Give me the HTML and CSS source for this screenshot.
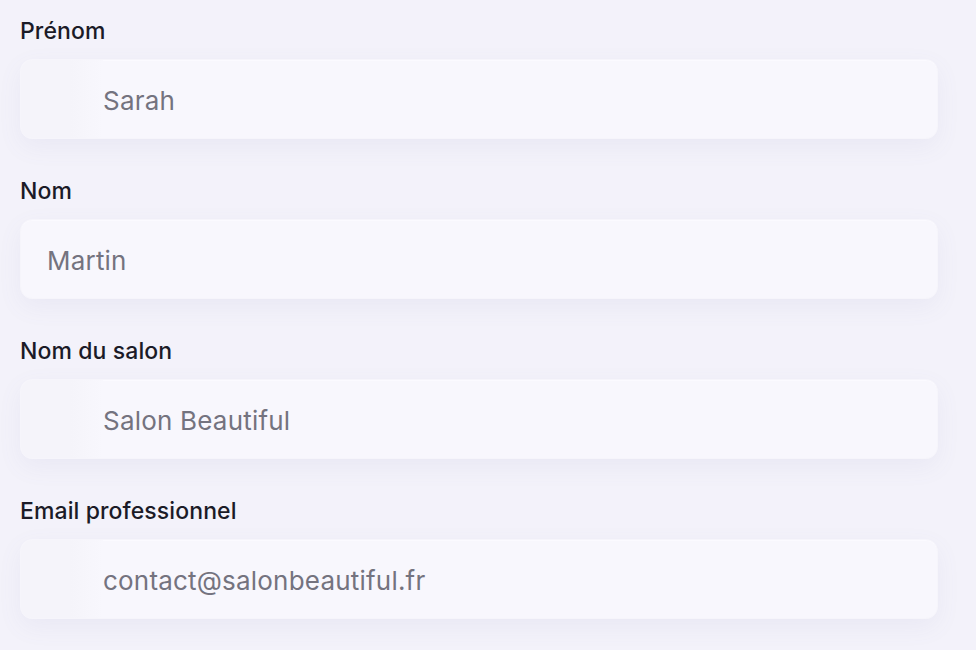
FILE: index.html
```html
<!DOCTYPE html>
<html lang="fr">
<head>
<meta charset="utf-8">
<title>Formulaire</title>
<link rel="stylesheet" href="styles.css">
</head>
<body>
<form class="form">
  <div class="field">
    <label class="label">Prénom</label>
    <div class="input has-icon"><span class="icon-slot"></span><span class="value">Sarah</span></div>
  </div>
  <div class="field">
    <label class="label">Nom</label>
    <div class="input"><span class="value">Martin</span></div>
  </div>
  <div class="field">
    <label class="label">Nom du salon</label>
    <div class="input has-icon"><span class="icon-slot"></span><span class="value">Salon Beautiful</span></div>
  </div>
  <div class="field">
    <label class="label">Email professionnel</label>
    <div class="input has-icon"><span class="icon-slot"></span><span class="value">contact@salonbeautiful.fr</span></div>
  </div>
</form>
</body>
</html>
```

FILE: styles.css
```css
html, body {
  margin: 0;
  padding: 0;
}
body {
  background: #f3f2fa;
  font-family: Inter, "Noto Sans", "Liberation Sans", sans-serif;
  width: 976px;
  height: 650px;
  overflow: hidden;
}
.form {
  display: flex;
  flex-direction: column;
  gap: 38px;
  padding: 17px 38px 0 20px;
}
.field {
  display: flex;
  flex-direction: column;
  gap: 14px;
}
.label {
  font-size: 23px;
  font-weight: 500;
  color: #1b1b27;
  line-height: 28px;
  letter-spacing: 0.1px;
}
.input {
  height: 80px;
  box-sizing: border-box;
  background: #f8f7fd;
  border-radius: 12px;
  border: 1px solid #f6f5fb;
  box-shadow: 0 8px 24px rgba(120, 110, 170, 0.07), inset 0 1px 0 #fbfaff;
  display: flex;
  align-items: center;
  padding-left: 26px;
  padding-top: 2px;
  overflow: hidden;
}
.input.has-icon {
  padding-left: 0;
}
.icon-slot {
  width: 82px;
  align-self: stretch;
  margin-top: -2px;
  background: linear-gradient(90deg, #f5f4fa 0%, #f5f4fa 60%, #f8f7fd 100%);
  flex: none;
}
.value {
  font-size: 26px;
  color: #74737f;
  letter-spacing: 0.2px;
}
```
